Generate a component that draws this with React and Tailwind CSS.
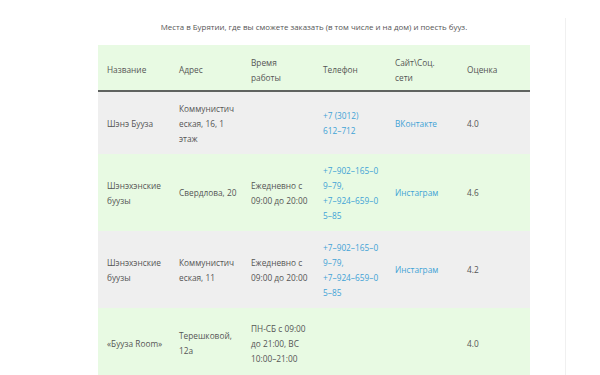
export default function App() {
  const link = "text-[#3fa3d6]";
  const rows = [
    {
      bg: "bg-[#efefef]",
      h: "h-[62px]",
      name: ["Шэнэ Бууза"],
      addr: ["Коммунистич", "еская, 16, 1", "этаж"],
      time: [],
      phone: ["+7 (3012)", "612–712"],
      site: "ВКонтакте",
      rate: "4.0",
    },
    {
      bg: "bg-[#e8fae3]",
      h: "h-[77px]",
      name: ["Шэнэхэнские", "буузы"],
      addr: ["Свердлова, 20"],
      time: ["Ежедневно с", "09:00 до 20:00"],
      phone: ["+7–902–165–0", "9–79,", "+7–924–659–0", "5–85"],
      site: "Инстаграм",
      rate: "4.6",
    },
    {
      bg: "bg-[#efefef]",
      h: "h-[77px]",
      name: ["Шэнэхэнские", "буузы"],
      addr: ["Коммунистич", "еская, 11"],
      time: ["Ежедневно с", "09:00 до 20:00"],
      phone: ["+7–902–165–0", "9–79,", "+7–924–659–0", "5–85"],
      site: "Инстаграм",
      rate: "4.2",
    },
    {
      bg: "bg-[#e8fae3]",
      h: "h-[70px]",
      name: ["«Бууза Room»"],
      addr: ["Терешковой,", "12а"],
      time: ["ПН-СБ с 09:00", "до 21:00, ВС", "10:00–21:00"],
      phone: [],
      site: "",
      rate: "4.0",
    },
  ];
  const Cell = ({ lines, cls = "" }) => (
    <div className={"w-[72px] pl-[9px] flex flex-col justify-center " + cls}>
      {lines.map((l, i) => (
        <span key={i} className="block whitespace-nowrap leading-[15px]">
          {l}
        </span>
      ))}
    </div>
  );
  return (
    <div
      className="w-[600px] h-[375px] overflow-hidden bg-white flex text-[8.3px] text-[#555555]"
      style={{ fontFamily: '"Open Sans", "Noto Sans", sans-serif' }}
    >
      <div className="w-[565px] pl-[98px] pt-[20px] shrink-0">
        <div className="w-[432px] text-center text-[7.9px] leading-[15px] mb-[10px]">
          Места в Бурятии, где вы сможете заказать (в том числе и на дом) и поесть бууз.
        </div>
        <div className="w-[432px]">
          <div className="flex h-[47px] pt-[4px] bg-[#e8fae3] border-b-2 border-[#5f6360]">
            <Cell lines={["Название"]} />
            <Cell lines={["Адрес"]} />
            <Cell lines={["Время", "работы"]} />
            <Cell lines={["Телефон"]} />
            <Cell lines={["Сайт\\Соц.", "сети"]} />
            <Cell lines={["Оценка"]} />
          </div>
          {rows.map((r, i) => (
            <div key={i} className={"flex " + r.bg + " " + r.h}>
              <Cell lines={r.name} />
              <Cell lines={r.addr} />
              <Cell lines={r.time} />
              <Cell lines={r.phone} cls={link} />
              <Cell lines={r.site ? [r.site] : []} cls={link} />
              <Cell lines={[r.rate]} />
            </div>
          ))}
        </div>
      </div>
      <div className="mt-[18px] border-l border-[#f0f0f0] flex-1" />
    </div>
  );
}
